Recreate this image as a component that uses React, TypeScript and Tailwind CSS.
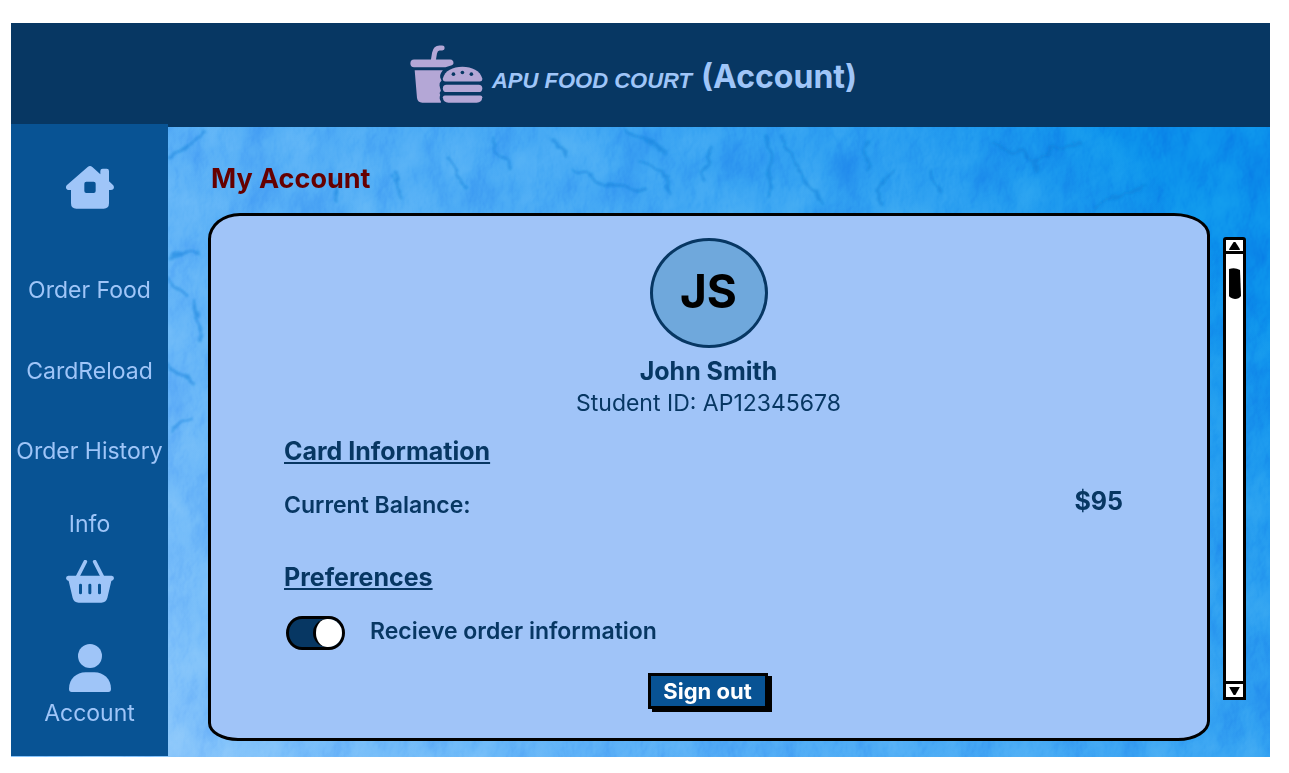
import React from "react";

function FoodLogo() {
  return (
    <svg viewBox="58 44 218 175" className="h-[58px] w-[73px] shrink-0 fill-[#b4a7d6]" aria-hidden="true">
      <path d="M127 92 L131 68 Q134 53 146 53 H154" fill="none" stroke="#b4a7d6" strokeWidth="15" strokeLinecap="round" strokeLinejoin="round" />
      <path d="M69 88 H178 Q189 89 188 100 Q187 105 176 107 L164 111 H69 Q58 110 58 99.500 Q58 89 69 88 Z" />
      <path d="M71 120 H156 Q146 132 148 142 L152 151 Q146 156 146 166 Q148 176 150 182 Q144 188 148 195 Q144 206 150 214 V218 H94 Q80 218 78 204 Z" />
      <path d="M156 145 C162 122 186 110 215 110 C244 110 268 122 275 145 Q276 154 267 154 H164 Q155 154 156 145 Z" />
      <rect x="156" y="164" width="119" height="22" rx="11" />
      <path d="M162 196 H269 Q275 196 275 202 Q274 218 258 218 H173 Q157 218 156 202 Q156 196 162 196 Z" />
      <g fill="#073763">
        <circle cx="188" cy="132" r="5.500" />
        <circle cx="215" cy="127" r="5.500" />
        <circle cx="242" cy="132" r="5.500" />
      </g>
    </svg>
  );
}

function HomeIcon() {
  return (
    <svg viewBox="0 0 144 129" className="h-[43px] w-12 fill-[#9fc5f8]" aria-hidden="true">
      <path
        fillRule="evenodd"
        d="M65 3 Q72 -3 79 3 L103 25 V15 Q103 8 110 8 H122 Q129 8 129 15 V46 L141 57 Q146 63 142 69 Q140 72 134 72 H129 V112 Q129 128 113 128 H31 Q15 128 15 112 V72 H8 Q3 72 1 68 Q-2 62 3 57 Z M61 47 Q55 47 55 53 V75 Q55 81 61 81 H83 Q89 81 89 75 V53 Q89 47 83 47 Z"
      />
    </svg>
  );
}

function BasketIcon() {
  return (
    <svg viewBox="0 0 144 129" className="h-[43px] w-12 fill-[#9fc5f8]" aria-hidden="true">
      <path d="M58 5 L35 50 M86 5 L109 50" fill="none" stroke="#9fc5f8" strokeWidth="11" strokeLinecap="round" />
      <path
        fillRule="evenodd"
        d="M7 47 H137 Q144 48 144 55 Q143 62 136 63 L124 114 Q120 128 106 128 H38 Q24 128 20 114 L8 63 Q1 62 0 55 Q0 48 7 47 Z M43.500 71 Q39 71 39 75 V99 Q39 103 43.500 103 Q48 103 48 99 V75 Q48 71 43.500 71 Z M72 71 Q67 71 67 75 V99 Q67 103 72 103 Q76 103 76 99 V75 Q76 71 72 71 Z M100 71 Q96 71 96 75 V99 Q96 103 100 103 Q105 103 105 99 V75 Q105 71 100 71 Z"
      />
    </svg>
  );
}

function UserIcon() {
  return (
    <svg viewBox="0 0 126 144" className="h-12 w-[42px] fill-[#9fc5f8]" aria-hidden="true">
      <circle cx="63" cy="36" r="36" />
      <path d="M0 135 C0 105 22 85 50 85 H76 C104 85 126 105 126 135 Q126 144 118 144 H8 Q0 144 0 135 Z" />
    </svg>
  );
}

function PaperTexture() {
  return (
    <svg className="absolute inset-0 h-full w-full" aria-hidden="true">
      <defs>
        <linearGradient id="paper" x1="0" y1="0.700" x2="1" y2="0.300">
          <stop offset="0" stopColor="#86c4fb" />
          <stop offset="0.300" stopColor="#5eb2f7" />
          <stop offset="0.600" stopColor="#44a8f4" />
          <stop offset="0.850" stopColor="#289df0" />
          <stop offset="1" stopColor="#0c92ec" />
        </linearGradient>
        <filter id="grain" x="0" y="0" width="100%" height="100%" colorInterpolationFilters="sRGB">
          <feTurbulence type="fractalNoise" baseFrequency="0.022 0.018" numOctaves="5" seed="21" />
          <feColorMatrix values="0.900 0 0 0 0.050  0.900 0 0 0 0.050  0.900 0 0 0 0.050  0 0 0 0 1" result="tone" />
          <feTurbulence type="fractalNoise" baseFrequency="0.030 0.022" numOctaves="5" seed="8" />
          <feDiffuseLighting surfaceScale="7" diffuseConstant="0.720" lightingColor="#ffffff">
            <feDistantLight azimuth="200" elevation="45" />
          </feDiffuseLighting>
          <feBlend in2="tone" mode="soft-light" />
        </filter>
        <filter id="rough" x="-5%" y="-5%" width="110%" height="110%">
          <feTurbulence type="fractalNoise" baseFrequency="0.060" numOctaves="3" seed="4" />
          <feDisplacementMap in="SourceGraphic" scale="14" xChannelSelector="R" yChannelSelector="G" />
          <feGaussianBlur stdDeviation="0.900" />
        </filter>
      </defs>
      <rect width="100%" height="100%" fill="url(#paper)" />
      <rect width="100%" height="100%" filter="url(#grain)" opacity="0.400" className="mix-blend-soft-light" />
      <g fill="none" stroke="#0b7fd8" strokeWidth="3" strokeLinecap="round" opacity="0.500" filter="url(#rough)">
        <path d="M617 3 L640 16 L653 26 M628 36 L657 48 L657 63 M566 43 L588 55 L639 63 M774 10 L785 40 L814 76" />
        <path d="M756 10 L759 66 M884 43 L865 60 L873 80 M982 16 L1023 33 L1026 46 M1070 16 L1040 22 L1023 36" />
        <path d="M1085 80 L1100 70 L1136 60 M544 10 L555 30 M858 16 L855 46 M193 6 L160 30 M383 46 L393 70" />
        <path d="M700 20 L694 50 M480 12 L500 40 M438 30 L452 62 M325 52 L326 74 M920 44 L930 66" />
        <path d="M182 176 L192 210 M157 153 L175 170 M158 130 L190 126 M160 240 L185 256 M160 300 L180 294" />
      </g>
    </svg>
  );
}

const navLink = "text-[23px] leading-[30px] whitespace-nowrap";
const sectionTitle = "text-[25px] leading-8 font-bold underline decoration-2 underline-offset-2";

function Sidebar() {
  return (
    <nav className="-mt-[3px] mb-px flex w-[157px] shrink-0 flex-col items-center bg-[#085394] pt-[42px] pb-7 text-[#9fc5f8]">
      <a href="#home" aria-label="Home"><HomeIcon /></a>
      <a href="#order" className={`${navLink} mt-[66px]`}>Order Food</a>
      <a href="#reload" className={`${navLink} mt-[51px]`}>CardReload</a>
      <a href="#history" className={`${navLink} mt-[50px]`}>Order History</a>
      <a href="#info" className={`${navLink} mt-[43px]`}>Info</a>
      <a href="#basket" aria-label="Basket" className="mt-[21px]"><BasketIcon /></a>
      <a href="#account" className="mt-[41px] flex flex-col items-center gap-[6px]">
        <UserIcon />
        <span className={navLink}>Account</span>
      </a>
    </nav>
  );
}

function ScrollRail() {
  return (
    <div className="mt-6 mb-[41px] flex w-[23px] shrink-0 flex-col rounded-t-[3px] border-[3px] border-black bg-white">
      <button type="button" aria-label="Scroll up" className="flex h-[14px] items-center justify-center border-b-[3px] border-black">
        <svg viewBox="0 0 12 9" className="h-2 w-[11px]"><path d="M5 0 H7 L12 8 V9 H0 V8 Z" /></svg>
      </button>
      <div className="flex flex-1 justify-center pt-[14px]">
        <svg viewBox="0 0 12 31" className="h-[31px] w-3"><path d="M0 1 Q6 -1 11 2 L12 28 Q10 31 6 31 Q1 30 0 28 Z" /></svg>
      </div>
      <button type="button" aria-label="Scroll down" className="flex h-4 items-center justify-center border-t-[3px] border-black">
        <svg viewBox="0 0 12 9" className="h-2 w-[11px]"><path d="M0 0 H12 L7 9 H5 Z" /></svg>
      </button>
    </div>
  );
}

export default function App() {
  return (
    <div className="flex min-h-screen flex-col bg-white pt-[23px] pr-[19px] pb-4 pl-[11px] font-['Inter','Liberation_Sans',sans-serif]">
      <header className="relative flex h-[104px] shrink-0 items-center justify-center bg-[#073763] pr-[14px] pb-[2px] text-[#9fc5f8]">
        <div className="flex items-center">
          <FoodLogo />
          <h1 className="ml-[9px] flex items-baseline gap-[9px] pt-[10px]">
            <span className="font-['Liberation_Sans',sans-serif] text-[22px] leading-10 font-bold italic">APU FOOD COURT</span>
            <span className="text-[32px] leading-10 font-bold">(Account)</span>
          </h1>
        </div>
      </header>

      <div className="relative isolate flex flex-1">
        <PaperTexture />
        <div className="relative flex flex-1">
          <Sidebar />
          <main className="flex min-w-0 flex-1 flex-col pt-[34px] pr-6 pb-4 pl-10">
            <h2 className="pl-[3px] text-[27px] leading-9 font-bold text-[#660000]">My Account</h2>
            <div className="mt-4 flex flex-1 gap-[13px]">
              <section className="flex flex-1 flex-col rounded-tl-[32px_26px] rounded-tr-[36px_22px] rounded-br-[32px_20px] rounded-bl-[30px_18px] border-[3px] border-black bg-[#a0c4f8] pt-[22px] pr-[84px] pb-[26px] pl-[73px] text-[#073763]">
                <div className="flex flex-col items-center pl-[10px]">
                  <div className="flex h-[110px] w-[118px] items-center justify-center rounded-[50%] border-[3px] border-[#073763] bg-[#6fa8dc] pb-1 text-[46px] font-bold text-black">JS</div>
                  <p className="mt-[7px] text-[25px] leading-8 font-bold">John Smith</p>
                  <p className="text-[23px] leading-8">Student ID: AP12345678</p>
                </div>
                <h3 className={`${sectionTitle} mt-4`}>Card Information</h3>
                <div className="mt-[18px] flex justify-between">
                  <span className="pt-1 text-[23px] leading-8 font-semibold">Current Balance:</span>
                  <span className="text-[25px] leading-8 font-bold">$95</span>
                </div>
                <h3 className={`${sectionTitle} mt-10`}>Preferences</h3>
                <label className="mt-[22px] flex items-center gap-[25px] pl-[2px]">
                  <input
                    type="checkbox"
                    defaultChecked
                    className="flex h-[34px] w-[59px] shrink-0 appearance-none justify-end rounded-[16px/17px] border-[3px] border-black bg-[#073763] before:block before:h-full before:w-[29px] before:rounded-full before:border-l-[3px] before:border-black before:bg-white before:content-['']"
                  />
                  <span className="pb-1 text-[23px] leading-8 font-semibold">Recieve order information</span>
                </label>
                <div className="mt-[22px] flex justify-center pl-2">
                  <button type="button" className="h-9 w-[120px] border-[3px] border-black bg-[#085394] text-[22px] leading-7 font-bold text-white shadow-[4px_3px_0_#000]">Sign out</button>
                </div>
              </section>
              <ScrollRail />
            </div>
          </main>
        </div>
      </div>
    </div>
  );
}
